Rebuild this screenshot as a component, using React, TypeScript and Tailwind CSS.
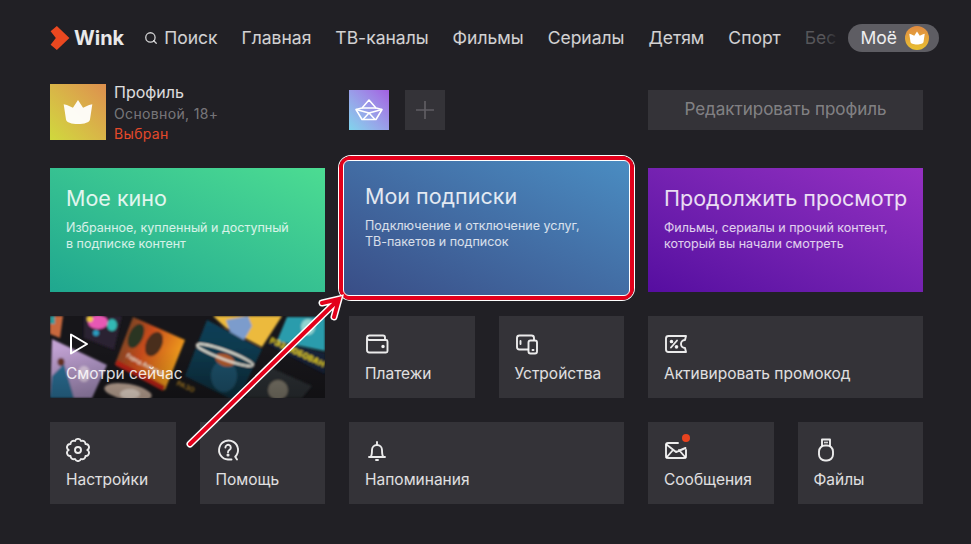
import { Search } from "lucide-react";
import type { ReactNode } from "react";

const font = { fontFamily: "Inter, 'Noto Sans', sans-serif" };

function Crown({ className }: { className?: string }) {
  return (
    <svg viewBox="0 0 32 26" className={className} fill="currentColor">
      <path d="M16 0l5.500 8.500L28 5.500l3.500-1L29 21c-.4 3-6 5-13 5S3.400 24 3 21L.5 4.500l3.500 1 6.500 3z" />
    </svg>
  );
}

function Boat() {
  return (
    <svg viewBox="0 0 28 22" className="w-7 h-5.5" fill="none" stroke="white" strokeWidth="1.500" strokeLinejoin="round">
      <path d="M14 1l7 8 6 1.500-6 10H7l-6-10L7 9z" />
      <path d="M7 9h14M1 10.500L14 14l13-3.500M14 14l-6 6.500M14 14l6 6.500" />
    </svg>
  );
}

function IconBox({ children }: { children: ReactNode }) {
  return (
    <svg viewBox="0 0 24 24" className="w-6 h-6 text-white/90" fill="none" stroke="currentColor" strokeWidth="1.900" strokeLinecap="round" strokeLinejoin="round">
      {children}
    </svg>
  );
}

const icons = {
  wallet: (
    <IconBox>
      <path d="M2 6.500V18a2.500 2.500 0 0 0 2.500 2.500H21a1.500 1.500 0 0 0 1.500-1.500V9.500A1.500 1.500 0 0 0 21 8H4.500A2.500 2.500 0 0 1 2 6 2.500 2.500 0 0 1 4.500 3.500H18a2 2 0 0 1 2 2V8" />
      <circle cx="18" cy="14.500" r=".8" fill="currentColor" />
    </IconBox>
  ),
  devices: (
    <IconBox>
      <path d="M13 17.500H4.500A2.500 2.500 0 0 1 2 15V6a2.500 2.500 0 0 1 2.500-2.500h12A2.500 2.500 0 0 1 19 6v1.500" />
      <rect x="13.500" y="8.500" width="8.500" height="13" rx="2" />
      <path d="M5.500 9v3M17.500 18h1" />
    </IconBox>
  ),
  promo: (
    <IconBox>
      <path d="M2 6.500A2.500 2.500 0 0 1 4.500 4H22l-1 4a4 4 0 0 0 0 8l1 4H4.500A2.500 2.500 0 0 1 2 17.500z" />
      <path d="M7 15.500l6-7" />
      <circle cx="7.500" cy="9.500" r=".9" fill="currentColor" />
      <circle cx="12.500" cy="14.800" r=".9" fill="currentColor" />
    </IconBox>
  ),
  gear: (
    <IconBox>
      <path d="M9 3a3.200 3.200 0 0 1 6 0 3.200 3.200 0 0 1 4.500 3 3.200 3.200 0 0 1 1.800 6 3.200 3.200 0 0 1-1.800 6A3.200 3.200 0 0 1 15 21a3.200 3.200 0 0 1-6 0 3.200 3.200 0 0 1-4.500-3 3.200 3.200 0 0 1-1.800-6 3.200 3.200 0 0 1 1.800-6A3.200 3.200 0 0 1 9 3z" />
      <circle cx="12" cy="12" r="3" />
    </IconBox>
  ),
  help: (
    <IconBox>
      <path d="M21 21.500l-1.800-2.700A9.500 9.500 0 1 0 12 21.500h3.500" />
      <path d="M9.400 9.500a2.700 2.700 0 1 1 4.200 2.300c-1 .7-1.600 1.300-1.600 2.400" />
      <circle cx="12" cy="17" r=".6" fill="currentColor" />
    </IconBox>
  ),
  bell: (
    <IconBox>
      <path d="M4 19h16M5.500 19c1.500-1.500 1.500-3.500 1.500-7a5 5 0 0 1 10 0c0 3.500 0 5.500 1.500 7M12 4v3M11 22h2" />
    </IconBox>
  ),
  mail: (
    <IconBox>
      <path d="M14 5H4a2 2 0 0 0-2 2v11a2 2 0 0 0 2 2h16a2 2 0 0 0 2-2v-6" />
      <path d="M2.500 6.500L12 14l9.500-4M2.500 19.500l6.500-7.500M21.500 19.500L15 12" />
    </IconBox>
  ),
  usb: (
    <IconBox>
      <rect x="5" y="7.500" width="14" height="15" rx="6" />
      <path d="M8 7.500V1.500h8v6M11 4.500h0M13 4.500h0" />
    </IconBox>
  ),
};

function Tile({ icon, label, className = "" }: { icon: ReactNode; label: string; className?: string }) {
  return (
    <div className={`relative flex flex-col gap-1.5 bg-[#343338] pl-4 pt-4 pb-3 ${className}`}>
      <div className="h-6">{icon}</div>
      <div className="text-[15.5px] leading-6 text-white/85">{label}</div>
    </div>
  );
}

function CardText({ title, lines }: { title: string; lines: string[] }) {
  return (
    <>
      <div className="whitespace-nowrap text-[21.5px] leading-7 text-white/85">{title}</div>
      <div className="mt-2 text-[12.5px] leading-4 text-white/80">
        {lines.map((l) => (
          <div key={l}>{l}</div>
        ))}
      </div>
    </>
  );
}

function BigCard({ title, lines, className }: { title: string; lines: string[]; className: string }) {
  return (
    <div className={`col-span-2 h-31 pl-4 pt-4 ${className}`}>
      <CardText title={title} lines={lines} />
    </div>
  );
}

function Collage() {
  return (
    <svg viewBox="0 0 275 82" preserveAspectRatio="none" className="absolute inset-0 h-full w-full">
      <defs>
        <filter id="soft"><feGaussianBlur stdDeviation="0.8" /></filter>
        <linearGradient id="red" x1="0" y1="0" x2="1" y2="0.5">
          <stop offset="0" stopColor="#4a3f28" />
          <stop offset="0.5" stopColor="#c94c1c" />
          <stop offset="1" stopColor="#f2a41e" />
        </linearGradient>
        <linearGradient id="lilac" x1="0" y1="0" x2="1" y2="1">
          <stop offset="0" stopColor="#c6a4d6" />
          <stop offset="1" stopColor="#9c88b4" />
        </linearGradient>
        <linearGradient id="blue" x1="0" y1="0" x2="0" y2="1">
          <stop offset="0" stopColor="#114058" />
          <stop offset="1" stopColor="#0e2e3c" />
        </linearGradient>
        <linearGradient id="shade" x1="0" y1="0" x2="0" y2="1">
          <stop offset="0.4" stopColor="#000" stopOpacity="0" />
          <stop offset="1" stopColor="#000" stopOpacity="0.25" />
        </linearGradient>
      </defs>
      <rect width="275" height="82" fill="#17161a" />
      <g filter="url(#soft)">
        <path d="M0 0h13l-3 22-10-4z" fill="#c8683c" />
        <path d="M0 0h5v8H0z" fill="#2d9a9a" />
        <path d="M34 0h38l-8 34-30-12z" fill="#2a2030" />
        <ellipse cx="48" cy="6" rx="10" ry="7" fill="#e858b4" />
        <ellipse cx="62" cy="9" rx="5" ry="6" fill="#33b8b4" />
        <ellipse cx="46" cy="17" rx="3" ry="3" fill="#2b9cc0" />
        <ellipse cx="40" cy="3" rx="3" ry="3" fill="#f0c840" />
        <path d="M2 23l55 26-15 33H0z" fill="url(#lilac)" />
        <path d="M2 60l12-12 10 34H0z" fill="#2a6e94" />
        <ellipse cx="11" cy="46" rx="3.500" ry="4" fill="#6a3528" />
        <ellipse cx="34" cy="58" rx="6" ry="8" fill="#dcc8e0" />
        <path d="M83 1l52 23-20 50-50-26z" fill="url(#red)" />
        <ellipse cx="86" cy="20" rx="7" ry="13" transform="rotate(25 86 20)" fill="#2c3622" />
        <ellipse cx="104" cy="28" rx="8" ry="13" transform="rotate(25 104 28)" fill="#4a2d1c" />
        <path d="M67 44l48 26-2 5-48-26z" fill="#b82418" />
        <text transform="translate(76 41) rotate(27)" fill="#f2e8d8" fontSize="5.500" fontWeight="700">Город Ангелов</text>
        <ellipse cx="78" cy="76" rx="24" ry="8" transform="rotate(10 78 76)" fill="#c0a898" />
        <ellipse cx="80" cy="78" rx="10" ry="5" fill="#ecdccf" />
        <path d="M157 4l55 29-25 53-52-26z" fill="url(#blue)" />
        <ellipse cx="174" cy="60" rx="13" ry="16" fill="#1f5068" />
        <ellipse cx="175" cy="44" rx="10" ry="6" transform="rotate(20 175 44)" fill="#b05a2c" />
        <ellipse cx="175" cy="39" rx="30" ry="4.500" transform="rotate(20 175 39)" fill="none" stroke="#f2ecde" strokeWidth="2" />
        <text transform="translate(126 69) rotate(24)" fill="#b08024" fontSize="7" fontWeight="700">РАЗО</text>
        <path d="M163 0h69l-20 31-36-19z" fill="#ecba3c" />
        <path d="M176 4l22-4 4 10-8 14-14-8z" fill="#7c9ccc" />
        <path d="M237 1h38v34l-48-10z" fill="#2a9cac" />
        <path d="M217 28l10-3 48 12v21z" fill="#142238" />
        <ellipse cx="258" cy="11" rx="7" ry="8" fill="#92d4d0" />
        <text transform="translate(219 26) rotate(25)" fill="#eed622" fontSize="8" fontWeight="800">РЭЗЛЮБОВАН</text>
        <path d="M215 49l47 21-10 12h-57z" fill="#2a2e32" />
        <ellipse cx="228" cy="74" rx="10" ry="10" fill="#7a7468" />
      </g>
      <rect width="275" height="82" fill="url(#shade)" />
    </svg>
  );
}

export default function App() {
  const nav = ["Главная", "ТВ-каналы", "Фильмы", "Сериалы", "Детям", "Спорт"];
  return (
    <div className="relative h-screen overflow-hidden bg-[#212025]" style={font}>
      <div className="flex items-center pl-12 pr-8 pt-6">
        <div className="mr-5 flex items-center gap-1 pl-0.5">
          <svg viewBox="0 0 18 23" className="h-6 w-5">
            <path d="M0 5l6-5 12 11.500L6 23l-6-5 5-6.500z" fill="#ea4820" />
          </svg>
          <span className="text-xl leading-7 font-bold text-white/90">Wink</span>
        </div>
        <div className="relative flex flex-1 items-center gap-6 whitespace-nowrap text-[17.5px] text-white/80">
          <span className="flex items-center gap-1.5">
            <Search className="h-3.5 w-3.5" strokeWidth={2.2} />
            Поиск
          </span>
          {nav.map((n) => (
            <span key={n}>{n}</span>
          ))}
          <span className="text-white/25">Бес</span>
          <div className="absolute inset-y-0 right-0 w-4 bg-linear-to-r from-transparent to-[#212025]" />
        </div>
        <div className="ml-2 flex h-7 items-center gap-2 rounded-full bg-[#5e5d63] pl-3 pr-2.5 text-[17.5px] text-white/90">
          Моё
          <span className="flex size-6 items-center justify-center rounded-full bg-linear-to-t from-[#e8c030] to-[#e08a40]">
            <Crown className="h-3.5 w-4 text-white" />
          </span>
        </div>
      </div>

      <div className="pl-12.5 pr-12">
        <div className="mt-8 grid h-14 grid-cols-6 items-start gap-x-6">
          <div className="col-span-2 flex h-14 items-center gap-2">
            <div className="flex size-14 items-center justify-center bg-linear-to-tr from-[#cfd93c] to-[#dd8f4e]">
              <Crown className="h-6 w-8 text-white/95" />
            </div>
            <div className="leading-5">
              <div className="text-base text-white/85">Профиль</div>
              <div className="text-sm tracking-wide text-white/40">Основной, 18+</div>
              <div className="text-sm tracking-wide text-[#e4492a]">Выбран</div>
            </div>
          </div>
          <div className="col-span-2 flex gap-4 pt-1.5">
            <div className="flex size-10 items-center justify-center bg-linear-to-tr from-[#7fd4ec] to-[#a25fe2]">
              <Boat />
            </div>
            <div className="flex size-10 items-center justify-center bg-[#343338]">
              <svg viewBox="0 0 16 16" className="size-4.5" stroke="#5f5e63" strokeWidth="1.500">
                <path d="M8 0v16M0 8h16" />
              </svg>
            </div>
          </div>
          <div className="col-span-2 pt-1.5">
            <div className="flex h-10 items-center justify-center bg-[#343338] text-[17px] text-white/40">
              Редактировать профиль
            </div>
          </div>
        </div>

        <div className="mt-7 grid grid-cols-6 gap-6">
          <BigCard
            title="Мое кино"
            lines={["Избранное, купленный и доступный", "в подписке контент"]}
            className="bg-linear-to-tr from-[#1fa78f] to-[#4cdc92]"
          />
          <div className="relative col-span-2 -mx-1.5 -mt-2 -mb-1 rounded-md bg-linear-to-tr from-[#394d86] to-[#4a8dc2] px-5.5 pt-5.5">
            <CardText title="Мои подписки" lines={["Подключение и отключение услуг,", "ТВ-пакетов и подписок"]} />
            <div className="absolute -inset-1 rounded-xl border-4 border-[#e3001b] ring-1 ring-white">
              <div className="absolute inset-0 rounded-md border border-white" />
            </div>
          </div>
          <BigCard
            title="Продолжить просмотр"
            lines={["Фильмы, сериалы и прочий контент,", "который вы начали смотреть"]}
            className="bg-linear-to-tr from-[#560da0] to-[#9530c2]"
          />

          <div className="relative col-span-2 overflow-hidden pb-3 pl-4 pt-4">
            <Collage />
            <div className="relative flex flex-col gap-1.5">
              <svg viewBox="0 0 24 24" className="size-6" fill="none" stroke="white" strokeWidth="2" strokeLinejoin="round">
                <path d="M5 2.500v19L21 12z" />
              </svg>
              <div className="text-[15.5px] leading-6 text-white/85">Смотри сейчас</div>
            </div>
          </div>
          <Tile icon={icons.wallet} label="Платежи" />
          <Tile icon={icons.devices} label="Устройства" />
          <Tile icon={icons.promo} label="Активировать промокод" className="col-span-2" />

          <Tile icon={icons.gear} label="Настройки" />
          <Tile icon={icons.help} label="Помощь" />
          <Tile icon={icons.bell} label="Напоминания" className="col-span-2" />
          <Tile
            icon={
              <div className="relative w-6">
                {icons.mail}
                <span className="absolute -right-0.5 -top-1 size-2 rounded-full bg-[#e8431f]" />
              </div>
            }
            label="Сообщения"
          />
          <Tile icon={icons.usb} label="Файлы" />
        </div>
      </div>

      <svg viewBox="0 0 971 544" className="pointer-events-none absolute inset-0 h-full w-full" fill="none" strokeLinecap="round" strokeLinejoin="miter">
        <path d="M190 444L337 301M322 303L339 299L334 317" stroke="white" strokeWidth="7" />
        <path d="M190 444L337 301M322 303L339 299L334 317" stroke="#e3001b" strokeWidth="4" />
      </svg>
    </div>
  );
}
